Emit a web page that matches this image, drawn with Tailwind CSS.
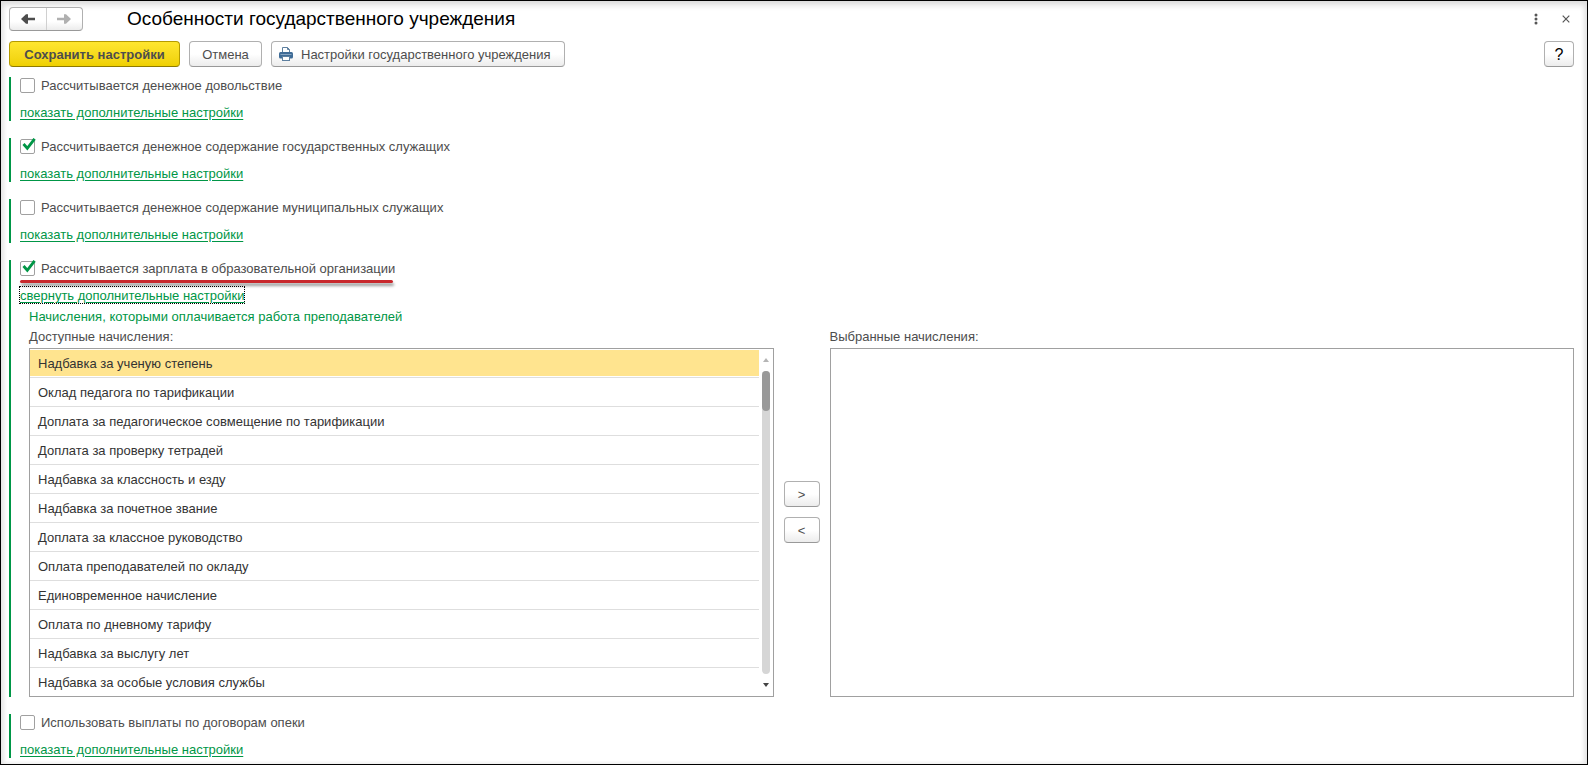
<!DOCTYPE html>
<html lang="ru">
<head>
<meta charset="utf-8">
<meta name="viewport" content="width=device-width, initial-scale=1">
<title>Особенности государственного учреждения</title>
<script src="https://cdn.jsdelivr.net/npm/@tailwindcss/browser@4"></script>
</head>
<body class="bg-white font-['Liberation_Sans',Arial,sans-serif] text-[13px] leading-[18px] text-[#4d4d4d]">
<div class="flex min-h-screen flex-col border border-black bg-white pt-1.5 pr-[13px] pb-1.5 pl-2 shadow-[inset_0_4px_6px_#dcdcdc,inset_-3px_0_5px_#ececec,inset_3px_0_4px_#f0f0f0]">

  <header class="flex h-6 items-center">
    <div class="flex h-6 w-[74px] shrink-0 rounded-sm border border-[#b0b0b0] border-b-[#999] bg-linear-to-b from-white from-60% to-[#ececec]">
      <button type="button" aria-label="Назад" class="flex flex-1 items-center justify-center border-r border-[#d0d0d0]">
        <svg width="14" height="10" viewBox="0 0 14 10" fill="#4d4d4d"><path d="M0 5 5 .3H7V3.7h7v2.6H7v3.4H5z"/></svg>
      </button>
      <button type="button" aria-label="Вперед" class="flex flex-1 items-center justify-center">
        <svg width="14" height="10" viewBox="0 0 14 10" fill="#b0b0b0"><path d="M14 5 9 .3H7V3.7H0v2.6h7v3.4h2z"/></svg>
      </button>
    </div>
    <h1 class="ml-11 flex-1 text-[19px] leading-6 text-black">Особенности государственного учреждения</h1>
    <button type="button" aria-label="Еще" class="flex h-6 w-6 items-center justify-center">
      <svg width="4" height="12" viewBox="0 0 4 12" fill="#555"><circle cx="2" cy="2" r="1.5"/><circle cx="2" cy="6" r="1.5"/><circle cx="2" cy="10" r="1.5"/></svg>
    </button>
    <button type="button" aria-label="Закрыть" class="-mr-1 ml-1.5 flex h-6 w-6 items-center justify-center">
      <svg width="8" height="8" viewBox="0 0 8 8" stroke="#555" stroke-width="1.2"><path d="M.7.7l6.6 6.6M7.3.7.7 7.3"/></svg>
    </button>
  </header>

  <div class="mt-2.5 flex items-center gap-[9px] *:h-[26px] *:pt-0.5">
    <button type="button" class="w-[171px] rounded-sm border border-[#b59b00] border-b-[#8f7b00] bg-linear-to-b from-[#ffe62e] to-[#efd000] font-bold text-[#4d4d4d]">Сохранить настройки</button>
    <button type="button" class="w-[73px] rounded-sm border border-[#b0b0b0] border-b-[#999] bg-linear-to-b from-white from-50% to-[#ececec]">Отмена</button>
    <button type="button" class="flex w-[294px] items-center gap-2 rounded-sm border border-[#b0b0b0] border-b-[#999] bg-linear-to-b from-white from-50% to-[#ececec] pl-[7px]">
      <svg class="mb-0.5" width="14" height="14" viewBox="0 0 14 14"><path d="M3.5 6V.5h5l2 2V6" fill="#fff" stroke="#5d7f9f"/><path d="M8.5.5v2h2" fill="none" stroke="#5d7f9f"/><rect y="5" width="14" height="6.5" rx="1.5" fill="#3f6c97"/><path d="M1.5 7.5h11" stroke="#86a5c2"/><rect x="3.5" y="9.5" width="7" height="4" fill="#fff" stroke="#5d7f9f"/></svg>
      <span>Настройки государственного учреждения</span>
    </button>
    <button type="button" aria-label="Справка" class="ml-auto w-[30px] rounded-sm border border-[#b0b0b0] border-b-[#999] bg-linear-to-b from-white from-50% to-[#ececec] text-[16px] text-black">?</button>
  </div>

  <main class="mt-2.5 flex flex-col gap-[17px]">
    <section class="flex h-11 flex-col gap-2.5 border-l-2 border-[#009646] pl-[9px]">
      <label class="flex items-start gap-1.5 self-start"><input type="checkbox" class="mt-px size-[15px] appearance-none rounded-xs border border-[#a0a0a0] bg-white">Рассчитывается денежное довольствие</label>
      <a href="#" class="self-start leading-4 text-[#009646] underline underline-offset-2">показать дополнительные настройки</a>
    </section>

    <section class="flex h-11 flex-col gap-2.5 border-l-2 border-[#009646] pl-[9px]">
      <label class="relative flex items-start gap-1.5 self-start"><input type="checkbox" checked class="mt-px size-[15px] appearance-none rounded-xs border border-[#a0a0a0] bg-white"><svg class="absolute left-0.5 top-0" width="14" height="13" viewBox="0 0 14 13" fill="none" stroke="#009646" stroke-width="2.8"><path d="M1.5 6 5.3 10.3 12.6 .8"/></svg>Рассчитывается денежное содержание государственных служащих</label>
      <a href="#" class="self-start leading-4 text-[#009646] underline underline-offset-2">показать дополнительные настройки</a>
    </section>

    <section class="flex h-11 flex-col gap-2.5 border-l-2 border-[#009646] pl-[9px]">
      <label class="flex items-start gap-1.5 self-start"><input type="checkbox" class="mt-px size-[15px] appearance-none rounded-xs border border-[#a0a0a0] bg-white">Рассчитывается денежное содержание муниципальных служащих</label>
      <a href="#" class="self-start leading-4 text-[#009646] underline underline-offset-2">показать дополнительные настройки</a>
    </section>

    <section class="border-l-2 border-[#009646] pl-[9px]">
      <div class="flex flex-col items-start">
        <label class="relative flex items-start gap-1.5"><input type="checkbox" checked class="mt-px size-[15px] appearance-none rounded-xs border border-[#a0a0a0] bg-white"><svg class="absolute left-0.5 top-0" width="14" height="13" viewBox="0 0 14 13" fill="none" stroke="#009646" stroke-width="2.8"><path d="M1.5 6 5.3 10.3 12.6 .8"/></svg>Рассчитывается зарплата в образовательной организации</label>
        <div class="mt-0.5 h-[3px] w-[373px] rounded-full bg-[#c8282d] shadow-[1px_3px_3px_#00000066]"></div>
        <a href="#" class="-ml-px mt-[3px] border border-dotted border-black pt-0.5 leading-[14px] text-[#009646] underline underline-offset-2">свернуть дополнительные настройки</a>
      </div>
      <div class="pl-[9px]">
        <h2 class="mt-1 text-[#009646]">Начисления, которыми оплачивается работа преподавателей</h2>
        <div class="mt-0.5 grid grid-cols-[1fr_36px_1fr] gap-x-2.5">
          <div>
            <div id="available" class="h-5">Доступные начисления:</div>
            <div class="flex border border-[#a0a0a0] bg-white">
              <ul role="listbox" aria-labelledby="available" class="flex-1 divide-y divide-[#dedede] text-[#333] *:flex *:h-[29px] *:items-center *:px-2 *:pt-0.5 *:last:h-7">
                <li role="option" aria-selected="true" class="bg-[#ffe48f] bg-clip-padding shadow-[inset_0_1px_#fff,inset_0_-1px_#fff]">Надбавка за ученую степень</li>
                <li role="option">Оклад педагога по тарификации</li>
                <li role="option">Доплата за педагогическое совмещение по тарификации</li>
                <li role="option">Доплата за проверку тетрадей</li>
                <li role="option">Надбавка за классность и езду</li>
                <li role="option">Надбавка за почетное звание</li>
                <li role="option">Доплата за классное руководство</li>
                <li role="option">Оплата преподавателей по окладу</li>
                <li role="option">Единовременное начисление</li>
                <li role="option">Оплата по дневному тарифу</li>
                <li role="option">Надбавка за выслугу лет</li>
                <li role="option">Надбавка за особые условия службы</li>
              </ul>
              <div class="flex w-3.5 flex-col items-center justify-between">
                <svg class="my-[9px]" width="6" height="4" viewBox="0 0 6 4" fill="#b5b5b5"><path d="M0 4 3 0l3 4z"/></svg>
                <div class="w-2 flex-1 rounded-full bg-[#d6d6d6]"><div class="h-10 rounded-full bg-[#999]"></div></div>
                <svg class="my-[9px]" width="6" height="4" viewBox="0 0 6 4" fill="#444"><path d="M0 0 3 4l3-4z"/></svg>
              </div>
            </div>
          </div>
          <div class="flex flex-col justify-center gap-2.5 pb-0.5">
            <button type="button" aria-label="Добавить" class="h-[26px] rounded-sm border border-[#b0b0b0] border-b-[#999] bg-linear-to-b from-white from-50% to-[#ececec] pt-0.5">&gt;</button>
            <button type="button" aria-label="Убрать" class="h-[26px] rounded-sm border border-[#b0b0b0] border-b-[#999] bg-linear-to-b from-white from-50% to-[#ececec] pt-0.5">&lt;</button>
          </div>
          <div class="flex flex-col">
            <div id="selected" class="h-5">Выбранные начисления:</div>
            <div role="listbox" aria-labelledby="selected" class="flex-1 border border-[#a0a0a0] bg-white"></div>
          </div>
        </div>
      </div>
    </section>

    <section class="flex h-11 flex-col gap-2.5 border-l-2 border-[#009646] pl-[9px]">
      <label class="flex items-start gap-1.5 self-start"><input type="checkbox" class="mt-px size-[15px] appearance-none rounded-xs border border-[#a0a0a0] bg-white">Использовать выплаты по договорам опеки</label>
      <a href="#" class="self-start leading-4 text-[#009646] underline underline-offset-2">показать дополнительные настройки</a>
    </section>
  </main>
</div>
</body>
</html>
